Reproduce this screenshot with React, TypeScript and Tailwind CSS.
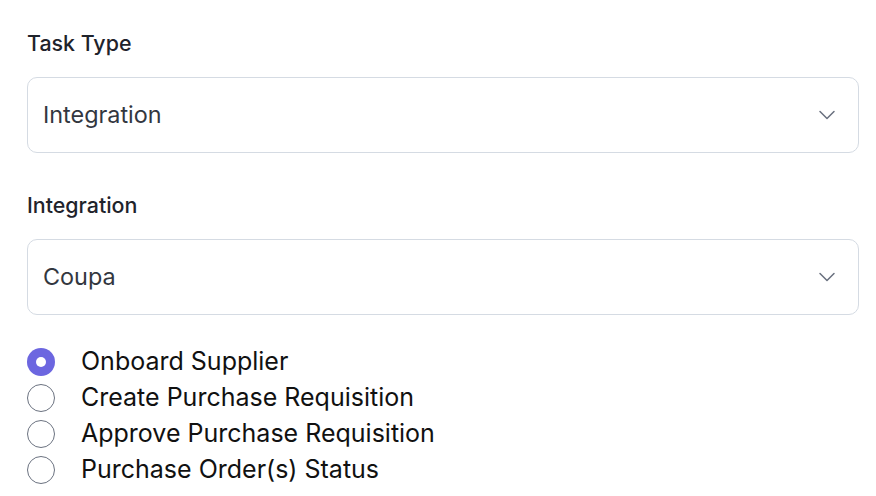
import { ChevronDown } from "lucide-react";

const OPTIONS = [
  "Onboard Supplier",
  "Create Purchase Requisition",
  "Approve Purchase Requisition",
  "Purchase Order(s) Status",
];

function SelectBox({ value }: { value: string }) {
  return (
    <div className="flex h-[76px] items-center justify-between rounded-[10px] border border-[#d5dbe3] bg-white pl-[15px] pr-[17px]">
      <span className="-mt-px text-[23.4px] text-[#33373f]">{value}</span>
      <ChevronDown className="h-[28px] w-[28px] text-[#6b7280]" strokeWidth={1.3} />
    </div>
  );
}

export default function App() {
  const selected = 0;

  return (
    <div className="min-h-screen bg-white pl-[27px] pr-[17px] pt-[29px] font-['Inter',sans-serif]">
      {/* Task type */}
      <label className="block text-[21.4px] leading-[28px] font-medium text-[#1f232b]">Task Type</label>
      <div className="mt-[20px]">
        <SelectBox value="Integration" />
      </div>

      {/* Integration */}
      <label className="mt-[38px] block text-[21.4px] leading-[28px] font-medium text-[#1f232b]">Integration</label>
      <div className="mt-[20px]">
        <SelectBox value="Coupa" />
      </div>

      {/* Actions */}
      <div className="mt-[29px] flex flex-col">
        {OPTIONS.map((opt, i) => (
          <label key={opt} className="flex h-[36px] items-center gap-[26px]">
            {i === selected ? (
              <span className="flex h-[28px] w-[28px] items-center justify-center rounded-full bg-[#6c66e0]">
                <span className="h-[10px] w-[10px] rounded-full bg-white" />
              </span>
            ) : (
              <span className="h-[28px] w-[28px] rounded-full border border-[#6b7280] bg-white" />
            )}
            <span className="text-[25px] text-[#111111]">{opt}</span>
          </label>
        ))}
      </div>
    </div>
  );
}
